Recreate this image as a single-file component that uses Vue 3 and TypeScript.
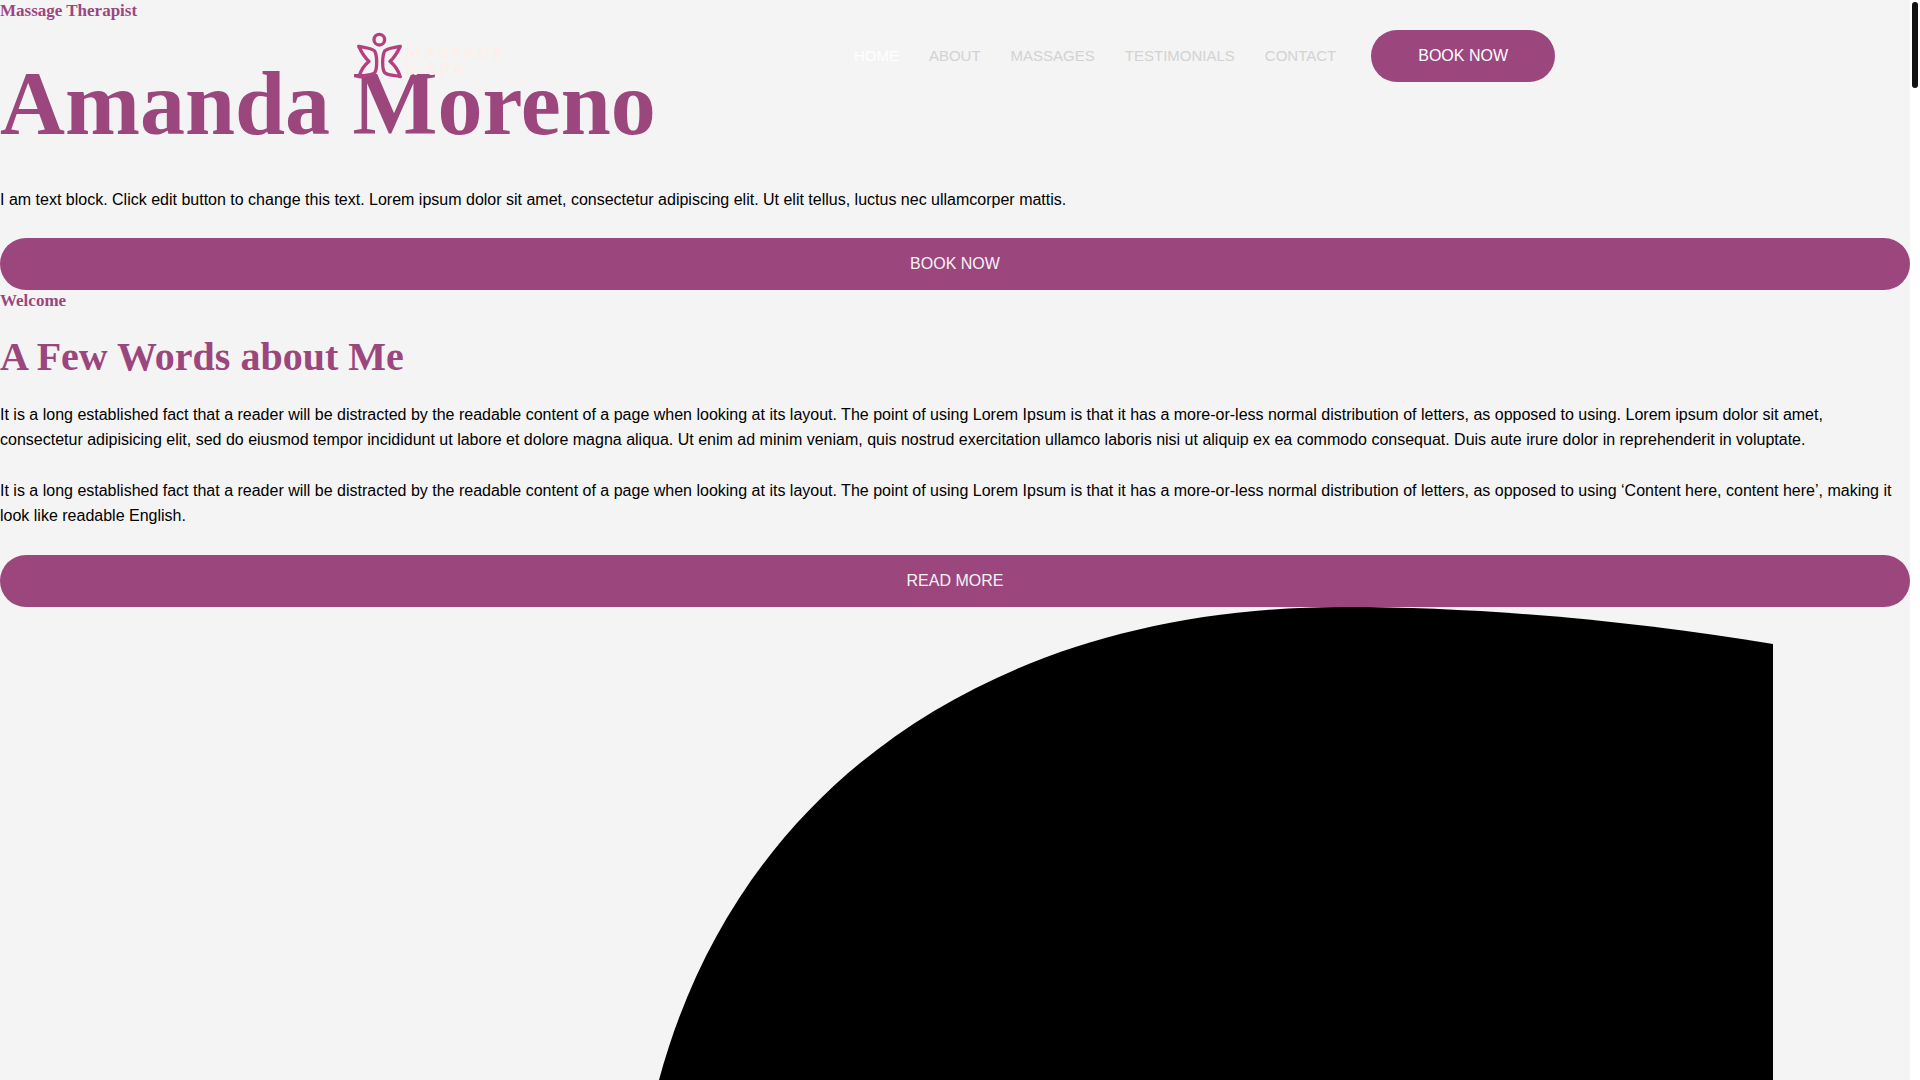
<script setup lang="ts">
interface NavItem {
  label: string
  href: string
  active?: boolean
}

const navItems: NavItem[] = [
  { label: 'HOME', href: '#home', active: true },
  { label: 'ABOUT', href: '#about' },
  { label: 'MASSAGES', href: '#massages' },
  { label: 'TESTIMONIALS', href: '#testimonials' },
  { label: 'CONTACT', href: '#contact' },
]
</script>

<template>
  <div class="page">
    <header class="site-header">
      <div class="header-inner">
        <a class="logo" href="#home">
          <svg class="logo-mark" viewBox="45 30 150 156" aria-hidden="true">
            <g fill="none" stroke="#b5407f" stroke-width="10" stroke-linejoin="round">
              <circle cx="118" cy="59" r="16" />
              <path d="M56 79 C78 83 96 84 104 93 C112 108 112 148 104 158 C96 166 76 165 57 170 C62 152 72 136 87 124 C72 112 64 96 56 79 Z" />
              <path d="M181 79 C159 83 141 84 134 93 C126 108 126 148 134 158 C141 166 161 165 181 170 C175 152 165 136 150 124 C165 112 173 96 181 79 Z" />
            </g>
          </svg>
          <span class="logo-text">
            <span>MASSAGE</span>
            <span>&amp; SPA</span>
          </span>
        </a>
        <nav class="nav" aria-label="Main">
          <a
            v-for="item in navItems"
            :key="item.label"
            class="nav-link"
            :class="{ active: item.active }"
            :href="item.href"
          >{{ item.label }}</a>
        </nav>
        <a class="button header-button" href="#book">BOOK NOW</a>
      </div>
    </header>

    <main>
      <section id="home">
        <h5 class="eyebrow">Massage Therapist</h5>
        <h1 class="hero-title">Amanda Moreno</h1>
        <p class="text">I am text block. Click edit button to change this text. Lorem ipsum dolor sit amet, consectetur adipiscing elit. Ut elit tellus, luctus nec ullamcorper mattis.</p>
        <a class="button" href="#book">BOOK NOW</a>
      </section>

      <section id="about">
        <h5 class="eyebrow">Welcome</h5>
        <h2 class="section-title">A Few Words about Me</h2>
        <div class="copy">
          <p class="text">It is a long established fact that a reader will be distracted by the readable content of a page when looking at its layout. The point of using Lorem Ipsum is that it has a more-or-less normal distribution of letters, as opposed to using. Lorem ipsum dolor sit amet, consectetur adipisicing elit, sed do eiusmod tempor incididunt ut labore et dolore magna aliqua. Ut enim ad minim veniam, quis nostrud exercitation ullamco laboris nisi ut aliquip ex ea commodo consequat. Duis aute irure dolor in reprehenderit in voluptate.</p>
          <p class="text">It is a long established fact that a reader will be distracted by the readable content of a page when looking at its layout. The point of using Lorem Ipsum is that it has a more-or-less normal distribution of letters, as opposed to using ‘Content here, content here’, making it look like readable English.</p>
        </div>
        <a class="button" href="#about">READ MORE</a>
      </section>

      <svg class="shape" viewBox="0 0 1910 473" aria-hidden="true">
        <path d="M1773 37 C1640 15 1490 0 1343 0 C1000 0 740 173 659 473 H1773 Z" />
      </svg>
    </main>

    <div class="scroll-rail" aria-hidden="true"><div class="scroll-thumb"></div></div>
  </div>
</template>

<style>
body {
  background: #f4f4f4;
}
</style>

<style scoped>
.page {
  position: relative;
  min-height: 100vh;
  box-sizing: border-box;
  padding-right: 10px;
  background: #f4f4f4;
  color: #000;
  font-family: "Liberation Sans", Arial, sans-serif;
  font-size: 16px;
}

.site-header {
  position: absolute;
  top: 30px;
  left: 0;
  right: 10px;
  z-index: 1;
}

.header-inner {
  display: flex;
  align-items: center;
  max-width: 1200px;
  margin: 0 auto;
}

.logo {
  display: flex;
  align-items: center;
  margin-right: auto;
  text-decoration: none;
}

.logo-mark {
  width: 50px;
  height: 52px;
}

.logo-text {
  display: flex;
  flex-direction: column;
  padding-top: 10px;
  color: #fdefea;
  font-family: Lato, sans-serif;
  font-size: 17px;
  font-weight: 700;
  line-height: 16px;
  letter-spacing: 3px;
}

.nav {
  display: flex;
  gap: 30px;
  margin-right: 35px;
}

.nav-link {
  color: #d2d2d2;
  font-size: 15px;
  line-height: 20px;
  text-decoration: none;
}

.nav-link.active {
  color: #fff;
}

.button {
  display: block;
  padding: 16px 47px;
  border-radius: 26px;
  background: #9c467e;
  color: #f4f4f4;
  font-size: 16px;
  line-height: 20px;
  text-align: center;
  text-decoration: none;
}

.header-button {
  color: #fff;
}

.eyebrow,
.hero-title,
.section-title {
  margin: 0;
  color: #9c467e;
  font-family: "Liberation Serif", "Times New Roman", serif;
  font-weight: 700;
}

.eyebrow {
  font-size: 17px;
  line-height: 22px;
}

.hero-title {
  margin: 32px 0 33px;
  font-size: 90px;
  line-height: 100px;
}

.section-title {
  margin: 21px 0;
  font-size: 40px;
  line-height: 48px;
}

.text {
  margin: 0 0 26px;
  line-height: 25px;
}

.copy {
  padding-bottom: 1px;
}

.shape {
  display: block;
  width: 100%;
}

.scroll-rail {
  position: fixed;
  top: 0;
  right: 0;
  bottom: 0;
  width: 10px;
  background: #fff;
}

.scroll-thumb {
  width: 6px;
  height: 86px;
  margin: 2px;
  border-radius: 3px;
  background: #111;
}
</style>
